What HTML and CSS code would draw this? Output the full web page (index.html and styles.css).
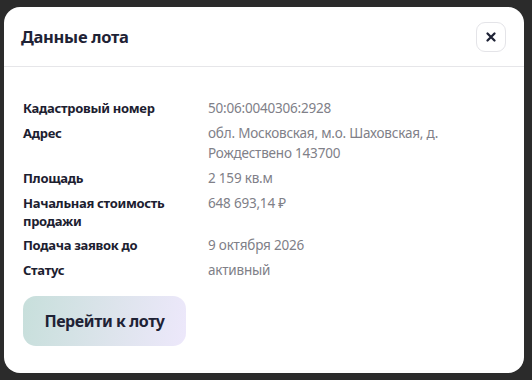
FILE: index.html
```html
<!DOCTYPE html>
<html lang="ru">
<head>
    <meta charset="UTF-8">
    <meta name="viewport" content="width=device-width, initial-scale=1.0">
    <title>Данные лота</title>
    <link rel="stylesheet" href="styles.css">
</head>
<body>
    <div class="modal">
        <div class="modal-header">
            <h2>Данные лота</h2>
            <button class="close-btn" aria-label="Закрыть">
                <svg width="12" height="12" viewBox="0 0 12 12">
                    <path d="M2.5 2.5 L9.5 9.5 M9.5 2.5 L2.5 9.5" stroke="#1e2235" stroke-width="2.3" stroke-linecap="round"/>
                </svg>
            </button>
        </div>
        <div class="modal-body">
            <div class="info">
                <div class="label">Кадастровый номер</div>
                <div class="value">50:06:0040306:2928</div>

                <div class="label">Адрес</div>
                <div class="value">обл. Московская, м.о. Шаховская, д. Рождествено 143700</div>

                <div class="label">Площадь</div>
                <div class="value">2 159 кв.м</div>

                <div class="label">Начальная стоимость продажи</div>
                <div class="value">648 693,14 ₽</div>

                <div class="label">Подача заявок до</div>
                <div class="value">9 октября 2026</div>

                <div class="label">Статус</div>
                <div class="value">активный</div>
            </div>
            <button class="go-btn">Перейти к лоту</button>
        </div>
    </div>
</body>
</html>
```

FILE: styles.css
```css
body {
    margin: 0;
    padding: 7px 8px 7px 4px;
    background-color: #2b2b2b;
    font-family: "Noto Sans", "Open Sans", sans-serif;
}
.modal {
    width: 520px;
    height: 366px;
    background-color: #fff;
    border-radius: 16px;
    overflow: hidden;
}
.modal-header {
    height: 59px;
    display: flex;
    align-items: center;
    justify-content: space-between;
    padding: 0 18px 0 17px;
    border-bottom: 1px solid #e6e6e9;
}
.modal-header h2 {
    margin: 0;
    font-size: 16.5px;
    letter-spacing: -0.3px;
    font-weight: 700;
    color: #1e2235;
}
.close-btn {
    width: 30px;
    height: 30px;
    border: 1px solid #e4e4e8;
    border-radius: 9px;
    background: #fff;
    padding: 0;
    display: flex;
    align-items: center;
    justify-content: center;
}
.modal-body {
    padding: 31px 19px 0 19px;
}
.info {
    display: grid;
    grid-template-columns: 185px 300px;
    row-gap: 5px;
}
.label {
    font-size: 13px;
    letter-spacing: -0.3px;
    line-height: 18px;
    font-weight: 700;
    color: #1c2030;
    padding-top: 1px;
    padding-right: 20px;
}
.value {
    font-size: 13.5px;
    letter-spacing: -0.2px;
    line-height: 20px;
    color: #808088;
}
.go-btn {
    margin-top: 16px;
    width: 163px;
    height: 50px;
    border: none;
    border-radius: 13px;
    background: linear-gradient(100deg, #c7dfdb 0%, #dde4ec 55%, #ede8fb 100%);
    font-family: inherit;
    font-size: 16px;
    letter-spacing: -0.4px;
    font-weight: 700;
    color: #1e2235;
}
```
